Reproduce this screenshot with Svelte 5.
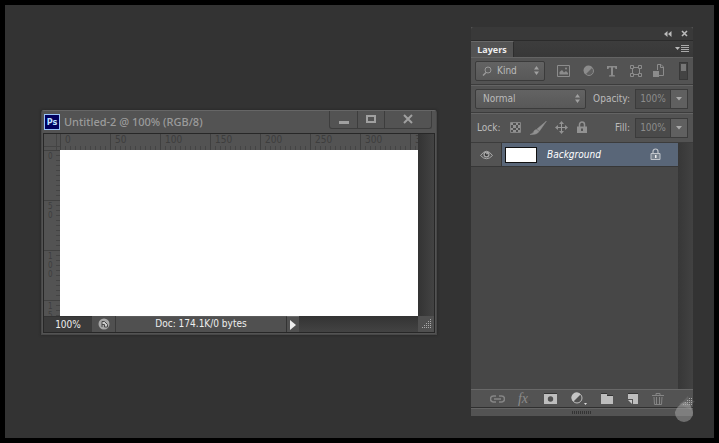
<script>
  const columns = [0, 50, 100, 150, 200, 250, 300, 350];
  const rows = ['0', '50', '100', '150'];
  let zoom = $state('100%');
  let opacity = $state('100%');
  let fill = $state('100%');
</script>

<main class="desktop">
  <section class="doc" aria-label="Untitled-2">
    <header class="titlebar">
      <span class="ps">Ps</span>
      <h1>Untitled-2 @ 100% (RGB/8)</h1>
      <div class="winbtns">
        <button class="wide" aria-label="Minimize"><svg width="12" height="12"><path d="M1 7h10v3H1z" fill="#a0a0a0" /></svg></button>
        <button aria-label="Maximize"><svg width="12" height="12"><path d="M2 2h8v6H2z" fill="none" stroke="#a0a0a0" stroke-width="2" /></svg></button>
        <button class="close" aria-label="Close"><svg width="12" height="12"><path d="M2 1l8 8M10 1l-8 8" stroke="#a0a0a0" stroke-width="2" /></svg></button>
      </div>
    </header>
    <div class="frame">
      <div class="work">
        <div class="side">
          <div class="corner"></div>
          <div class="vruler">
            {#each rows as r}
              <div class="vmark">{#each r.split('') as d}<span>{d}</span>{/each}</div>
            {/each}
          </div>
        </div>
        <div class="center">
          <div class="hruler">
            {#each columns as c}<span class="hmark">{c}</span>{/each}
          </div>
          <div class="canvas"></div>
        </div>
        <div class="vscroll"></div>
      </div>
      <footer class="status">
        <input class="zoom" aria-label="Zoom" bind:value={zoom} />
        <button class="share" aria-label="Share"><svg width="12" height="12"><circle cx="6" cy="6" r="5.500" fill="#a8a8a8" /><path d="M4 9V3.500h2.500L9.500 6.500V9H6.500V6.500H4" fill="#ccc" stroke="#484848" /></svg></button>
        <div class="info">Doc: 174.1K/0 bytes</div>
        <button class="play" aria-label="Status options"><svg width="8" height="10"><path d="M1 0v10l6-5z" fill="#eee" /></svg></button>
        <div class="hscroll"></div>
        <div class="resize"><svg width="16" height="16"><g stroke="#aaa" stroke-dasharray="1 1"><path d="M12 3.500h1M10 5.500h3M8 7.500h5M6 9.500h7M4 11.500h9" /></g></svg></div>
      </footer>
    </div>
  </section>

  <aside class="panel" aria-label="Layers">
    <div class="paneltop">
      <button aria-label="Collapse"><svg width="8" height="6"><path d="M3.500 0v6L0 3zM7.500 0v6L4 3z" fill="#bbb" /></svg></button>
      <button aria-label="Close panel"><svg width="7" height="7"><path d="M1 1l5 5M6 1L1 6" stroke="#bbb" stroke-width="1.600" /></svg></button>
    </div>
    <div class="tabs">
      <h2>Layers</h2>
      <button aria-label="Panel menu"><svg width="15" height="8"><path d="M0 2h5L2.500 5z" fill="#bbb" /><path d="M6 .5h8M6 2.500h8M6 4.500h8M6 6.500h8" stroke="#aaa" /></svg></button>
    </div>
    <div class="row filter">
      <div class="select kind">
        <svg class="mag" width="10" height="10"><circle cx="6" cy="4" r="3" fill="none" stroke="#999" /><path d="M4 6.500L1 9.500" stroke="#999" stroke-width="1.500" /></svg>
        <select aria-label="Filter type"><option>Kind</option></select>
        <svg class="arrows" width="7" height="9"><path d="M1 3.500L3.500 0 6 3.500zM1 5.500h5L3.500 9z" fill="#a0a0a0" /></svg>
      </div>
      <div class="tools">
        <button aria-label="Pixel layers"><svg width="14" height="12"><path d="M.5.5h12v11H.5z" fill="none" stroke="#8c8c8c" /><path d="M2.500 9.500V7l2.500-2 2 2.500L9 6l2 2v1.500z" fill="#8c8c8c" /><circle cx="9" cy="3.500" r="1" fill="#8c8c8c" /></svg></button>
        <button aria-label="Adjustment layers"><svg width="12" height="12"><circle cx="6" cy="6" r="4.500" fill="#606060" stroke="#8a8a8a" /><path d="M2.500 9.500A5 5 0 1 1 9.500 2.500z" fill="#8c8c8c" /></svg></button>
        <button aria-label="Type layers"><svg width="12" height="12"><path d="M1 4V1h10v3H9.500L9 2.500H7V10l2 .5V11.500H3V10.500L5 10V2.500H3L2.500 4z" fill="#8c8c8c" /></svg></button>
        <button aria-label="Shape layers"><svg width="12" height="12"><g fill="none" stroke="#8c8c8c"><path d="M2.500 3v6M9.500 3v6M3 2.500h6M3 9.500h6" /><path d="M.5.5h3v3h-3zM8.500.5h3v3h-3zM.5 8.500h3v3h-3zM8.500 8.500h3v3h-3z" fill="#535353" /></g></svg></button>
        <button aria-label="Smart objects"><svg width="12" height="13"><path d="M4.500 6V.5H8L10.500 3v8.500H6M7.500.5v3h3" fill="none" stroke="#8c8c8c" /><path d="M0 7h6v6H0z" fill="#8c8c8c" /></svg></button>
      </div>
      <button class="toggle" aria-label="Toggle filter"><span></span></button>
    </div>
    <div class="row blend">
      <div class="select mode">
        <select aria-label="Blend mode"><option>Normal</option></select>
        <svg class="arrows" width="7" height="9"><path d="M1 3.500L3.500 0 6 3.500zM1 5.500h5L3.500 9z" fill="#a0a0a0" /></svg>
      </div>
      <label for="opacity">Opacity:</label>
      <div class="combo">
        <input id="opacity" bind:value={opacity} />
        <button aria-label="Opacity slider"><svg width="7" height="4"><path d="M0 0h6L3 3.500z" fill="#aaa" /></svg></button>
      </div>
    </div>
    <div class="row lock">
      <span>Lock:</span>
      <div class="locks">
        <button aria-label="Lock transparent pixels"><svg width="12" height="12"><path d="M.5.5h10v10H.5z" fill="#505050" stroke="#858585" /><path d="M1 1h2v2H1zM6 1h2v2H6zM3 3h3v3H3zM8 3h2v3H8zM1 6h2v2H1zM6 6h2v2H6zM3 8h3v2H3zM8 8h2v2H8z" fill="#929292" /></svg></button>
        <button aria-label="Lock image pixels"><svg width="17" height="14"><path d="M16.500 0L9.500 10 7 8zM6.500 8.500l2.500 2q-2 3.500-9 3Q4 12 4 10q1-1.500 2.500-1.500z" fill="#929292" stroke="#929292" stroke-width=".5" /></svg></button>
        <button aria-label="Lock position"><svg width="13" height="13"><path d="M6.500 2v9M2 6.500h9" stroke="#999" /><path d="M6.500 0L9 3H4zM6.500 13L4 10h5zM0 6.500L3 4v5zM13 6.500L10 9V4z" fill="#929292" /></svg></button>
        <button aria-label="Lock all"><svg width="12" height="13"><path d="M3.500 6V3.500a2.500 2.500 0 0 1 5 0V6" fill="none" stroke="#929292" stroke-width="1.500" /><path fill-rule="evenodd" d="M1 5.500h10V12H1zM5 7.500v2.500h2V7.500z" fill="#929292" /></svg></button>
      </div>
      <label for="fill">Fill:</label>
      <div class="combo">
        <input id="fill" bind:value={fill} />
        <button aria-label="Fill slider"><svg width="7" height="4"><path d="M0 0h6L3 3.500z" fill="#aaa" /></svg></button>
      </div>
    </div>
    <div class="list">
      <div class="layers">
        <div class="layer">
          <button class="eye" aria-label="Toggle visibility"><svg width="13" height="10"><path d="M.5 5.500Q6.500-3 12.500 5.500 6.500 12 .5 5.500z" fill="#555" stroke="#aaa" /><circle cx="6.500" cy="4.500" r="3" fill="#aaa" /><circle cx="6.500" cy="4.500" r="1.700" fill="#333" /><circle cx="7" cy="3.800" r=".7" fill="#eee" /></svg></button>
          <div class="item">
            <span class="thumb"></span>
            <em>Background</em>
            <svg width="11" height="13"><path d="M3 6V3.500a2.500 2.500 0 0 1 5 0V6" fill="none" stroke="#bfc3c9" stroke-width="1.200" /><path d="M1 5.500h9v6H1z" fill="#77818d" stroke="#bfc3c9" /><path d="M5 7h1.500v3H5z" fill="#eee" /></svg>
          </div>
        </div>
      </div>
      <div class="track"></div>
    </div>
    <div class="actions">
      <button aria-label="Link layers"><svg width="15" height="8"><g fill="none" stroke="#858585" stroke-width="1.500"><path d="M6 1H3.500a3 3 0 0 0 0 6H6M9 1h2.500a3 3 0 0 1 0 6H9M4 4h7" /></g></svg></button>
      <button class="fx" aria-label="Layer style">fx<span>.</span></button>
      <button aria-label="Add mask"><svg width="14" height="12"><path d="M0 1h13v10H0z" fill="#bdbdbd" /><path d="M0 .5h13" stroke="#333" /><circle cx="6.500" cy="6" r="2.700" fill="#505050" /></svg></button>
      <button aria-label="New adjustment layer"><svg width="17" height="13"><circle cx="6" cy="6" r="5" fill="#505050" stroke="#bdbdbd" /><path d="M2.500 9.500A5 5 0 1 1 9.500 2.500z" fill="#c4c4c4" /><path d="M13 11h3l-1.500 2z" fill="#ddd" /></svg></button>
      <button aria-label="New group"><svg width="13" height="12"><path d="M0 1h6v2h6v8H0z" fill="#bdbdbd" /><path d="M0 .5h6M6 2.500h6" stroke="#333" /></svg></button>
      <button aria-label="New layer"><svg width="12" height="12"><path d="M1 1h10v10H6V6H1z" fill="#bdbdbd" /><path d="M1 .5h10" stroke="#333" /><path d="M1 7h4v4z" fill="#c8c8c8" /></svg></button>
      <button aria-label="Delete layer"><svg width="12" height="12"><path d="M0 2.500h12M4 2V.5h4V2M2 4l.5 7.500h7L10 4M4.500 4v7M7.500 4v7" fill="none" stroke="#858585" /></svg></button>
    </div>
    <div class="grip"><span></span></div>
    <svg class="blob" width="20" height="26"><path d="M0 16Q2 10 9 6q3 0 6 3 3 5 3 8a9 9 0 0 1-18 0z" fill="#aaa" opacity=".5" /><path d="M4 8Q9 5 13 0l1 4 6 1-4 4q1 3 0 5z" fill="#aaa" opacity=".2" /><g stroke="#aaa" stroke-dasharray="1 1"><path d="M14 2.500h3M12 4.500h5M10 6.500h7M8 8.500h9" /></g></svg>
  </aside>
</main>

<style>
  :global(body) { margin: 0; background: #000; }
  .desktop, .desktop * { box-sizing: border-box; }
  .desktop {
    position: relative;
    min-height: 100vh;
    border: 5px solid #000;
    background: #333;
    color: #ccc;
    font: 10px/14px "DejaVu Sans Condensed", "Noto Sans", sans-serif;
  }
  button, input, select { margin: 0; padding: 0; border: 0; border-radius: 0; background: none; color: inherit; font: inherit; appearance: none; outline: 0; }
  button { display: flex; align-items: center; justify-content: center; }
  svg { display: block; flex: none; }
  h1, h2 { margin: 0; }

  .doc {
    position: absolute;
    top: 105px; bottom: 103px; left: 36px; right: 277px;
    display: flex; flex-direction: column;
    padding: 0 1px 1px;
    border: 1px solid #484848; border-top-color: #666; border-radius: 3px 3px 0 0;
    background: #535353;
    box-shadow: 0 0 3px #222;
  }
  .titlebar { display: flex; height: 22px; align-items: center; gap: 4px; padding: 0 3px 0 1px; }
  .ps { width: 16px; height: 16px; border: 1px solid #9ac4f8; background: #00005e; color: #bfe0ff; font-weight: bold; font-size: 9px; line-height: 14px; text-align: center; }
  h1 { flex: 1; font: 500 11px/14px "Noto Sans", sans-serif; color: #9b9b9b; }
  .winbtns { display: flex; align-self: flex-start; height: 18px; border: 1px solid #3d3d3d; border-top: 0; border-radius: 0 0 3px 3px; }
  .winbtns button { width: 27px; border-left: 1px solid #3d3d3d; }
  .winbtns .wide { border: 0; }
  .winbtns .close { width: 47px; }
  .frame { flex: 1; min-height: 0; display: flex; flex-direction: column; border: 1px solid #272727; }
  .work { flex: 1; display: flex; min-height: 0; }
  .side { width: 16px; display: flex; flex-direction: column; color: #3d3d3d; }
  .corner { height: 16px; background: linear-gradient(#444, #444) 0 12px / 100% 1px no-repeat, linear-gradient(#444, #444) 12px 0 / 1px 100% no-repeat; }
  .vruler { flex: 1; min-height: 0; overflow: hidden; background: repeating-linear-gradient(#444 0 1px, transparent 1px 5px) right / 4px 100% no-repeat; }
  .vmark { height: 50px; padding: 1px 0 0 4px; border-top: 1px solid #404040; display: flex; flex-direction: column; font-size: 8px; }
  .vmark span { height: 9px; line-height: 9px; }
  .center { flex: 1; min-width: 0; display: flex; flex-direction: column; }
  .hruler { height: 16px; display: flex; overflow: hidden; color: #3d3d3d; background: repeating-linear-gradient(90deg, #444 0 1px, transparent 1px 5px) bottom / 100% 4px no-repeat; }
  .hmark { flex: none; width: 50px; padding-left: 4px; border-left: 1px solid #404040; line-height: 11px; }
  .canvas { flex: 1; background: #fff; }
  .vscroll { width: 16px; background: linear-gradient(90deg, #333, #434343); }
  .status { display: flex; height: 16px; color: #eee; background: #3b3b3b; }
  .zoom { width: 48px; text-align: center; border-top: 1px solid #333; }
  .share { width: 24px; background: #505050; border-right: 1px solid #3a3a3a; }
  .info { width: 171px; text-align: center; background: #505050; border-top: 1px solid #5a5a5a; border-right: 1px solid #333; }
  .play { width: 12px; background: #505050; border-top: 1px solid #6a6a6a; }
  .hscroll { flex: 1; background: linear-gradient(#333, #434343); }
  .resize { width: 16px; background: #505050; }

  .panel { position: absolute; top: 22px; bottom: 22px; right: 21px; width: 222px; display: flex; flex-direction: column; background: #535353; }
  .paneltop { display: flex; align-items: center; justify-content: flex-end; gap: 9px; height: 13px; padding-right: 5px; background: #393939; border-radius: 3px 3px 0 0; }
  .tabs { display: flex; justify-content: space-between; height: 17px; padding-right: 3px; background: linear-gradient(#3d3d3d, #383838); border-top: 1px solid #2b2b2b; }
  .tabs h2 { width: 43px; background: #535353; border-top: 1px solid #686868; border-right: 1px solid #2d2d2d; color: #eee; font: bold 9px/15px "Open Sans", "Noto Sans", sans-serif; text-align: center; }
  .row { display: flex; align-items: center; height: 28px; padding: 0 5px 0 4px; border-bottom: 1px solid #3c3c3c; box-shadow: inset 0 1px #646464; color: #bbb; }
  .select { position: relative; display: flex; align-items: center; height: 20px; border: 1px solid #3b3b3b; border-radius: 2px; background: linear-gradient(#636363, #585858); }
  .select select { width: 100%; height: 18px; padding-left: 7px; }
  .select.kind { width: 70px; }
  .kind select { padding-left: 21px; }
  .mag { position: absolute; left: 6px; }
  .arrows { position: absolute; right: 4px; pointer-events: none; }
  .tools { flex: 1; display: flex; justify-content: space-between; padding: 0 14px 0 12px; }
  .toggle { width: 9px; height: 18px; padding: 1px; align-items: flex-start; border: 1px solid #383838; background: #434343; }
  .toggle span { width: 100%; height: 7px; background: #777; }
  .select.mode { width: 111px; }
  label { flex: 1; text-align: right; padding-right: 5px; }
  .combo { display: flex; height: 20px; border: 1px solid #3b3b3b; }
  .combo input { width: 34px; background: #4a4a4a; text-align: center; color: #8c8c8c; }
  .combo button { width: 17px; border-left: 1px solid #3b3b3b; background: #606060; }
  .row.lock { height: 30px; padding-left: 6px; }
  .locks { display: flex; align-items: center; gap: 8px; padding-left: 9px; }
  .list { flex: 1; min-height: 0; display: flex; background: #474747; }
  .layers { flex: 1; }
  .layer { display: flex; height: 24px; border-bottom: 1px solid #373737; }
  .eye { width: 31px; background: #535353; border-right: 1px solid #393939; }
  .item { flex: 1; display: flex; align-items: center; padding: 0 17px 0 3px; background: #596678; }
  .thumb { width: 32px; height: 16px; border: 1px solid #111; background: #fff; }
  em { flex: 1; padding: 1px 0 0 10px; color: #fff; }
  .track { width: 15px; background: linear-gradient(90deg, #373737, #424242); }
  .actions { display: flex; align-items: center; justify-content: space-between; height: 19px; padding: 0 29px 0 19px; border-top: 1px solid #686868; border-bottom: 1px solid #2f2f2f; }
  .fx { font: italic 14px/14px "Liberation Serif", serif; color: #8b8b8b; }
  .fx span { color: #444; }
  .grip { height: 8px; display: flex; align-items: center; justify-content: center; border-top: 1px solid #646464; }
  .grip span { width: 20px; height: 3px; background: repeating-linear-gradient(90deg, #333 0 1px, transparent 1px 2px); }
  .blob { position: absolute; right: -2px; bottom: -6px; }
</style>
